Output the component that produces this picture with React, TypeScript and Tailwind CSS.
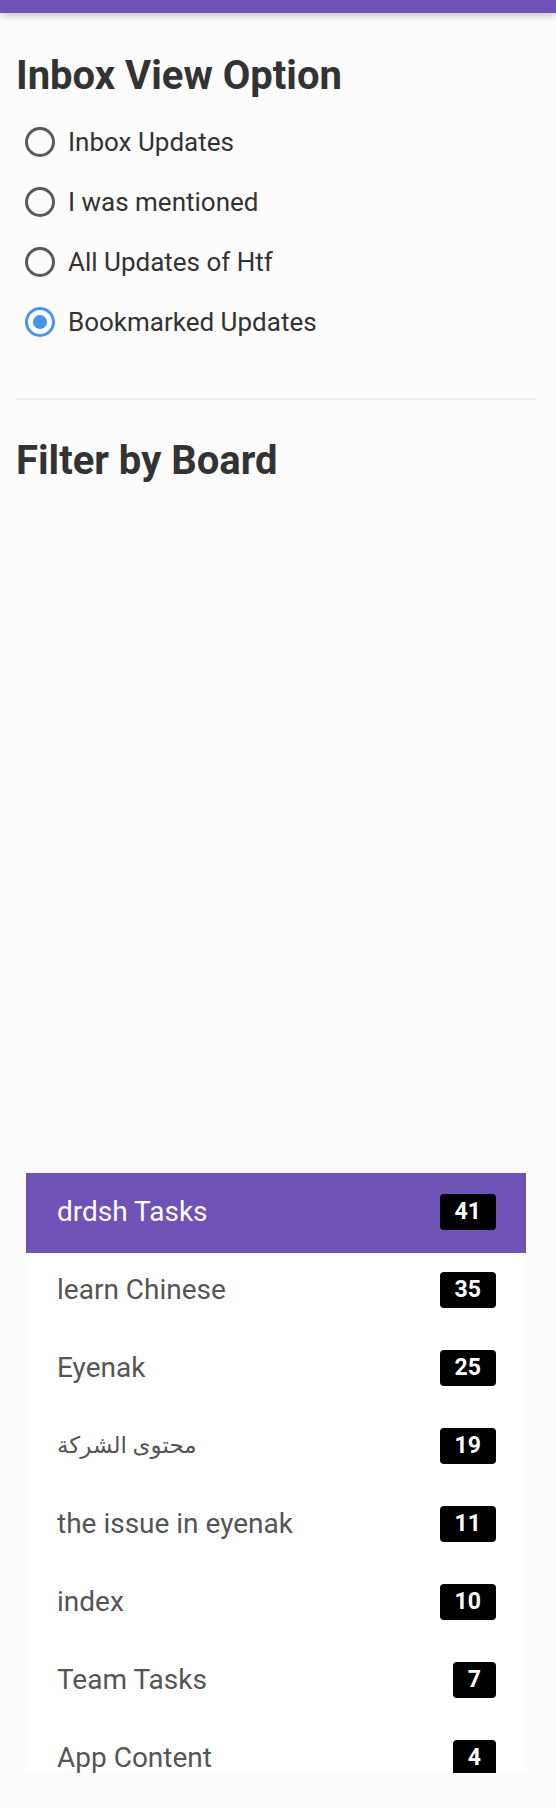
import React, { useState } from 'react';

const options = ['Inbox Updates', 'I was mentioned', 'All Updates of Htf', 'Bookmarked Updates'];

const boards = [
  { name: 'drdsh Tasks', count: 41 },
  { name: 'learn Chinese', count: 35 },
  { name: 'Eyenak', count: 25 },
  { name: 'محتوى الشركة', count: 19, rtl: true },
  { name: 'the issue in eyenak', count: 11 },
  { name: 'index', count: 10 },
  { name: 'Team Tasks', count: 7 },
  { name: 'App Content', count: 4 },
];

export default function App() {
  const [view, setView] = useState(3);
  const [board, setBoard] = useState(0);

  return (
    <div className="min-h-[1808px] bg-[#fcfcfc] font-['Roboto','DejaVu_Sans',sans-serif]">
      <div className="h-[13px] bg-[#6e52b6] shadow-[0_2px_8px_rgba(0,0,0,0.25)]" />

      <div className="pl-4 pr-5 pt-[39px]">
        <h1 className="text-[40px] leading-[48px] font-bold text-[#333]">Inbox View Option</h1>

        <div className="mt-3">
          {options.map((opt, i) => (
            <label
              key={opt}
              onClick={() => setView(i)}
              className="flex h-[60px] items-center cursor-pointer"
            >
              <span
                className={
                  view === i
                    ? 'ml-[9px] flex h-[30px] w-[30px] items-center justify-center rounded-full border-[3.5px] border-[#4a95ec]'
                    : 'ml-[9px] flex h-[30px] w-[30px] items-center justify-center rounded-full border-[3.5px] border-[#595959]'
                }
              >
                {view === i && <span className="h-[14px] w-[14px] rounded-full bg-[#4a95ec]" />}
              </span>
              <span className="ml-[13px] text-[26px] text-[#333]">{opt}</span>
            </label>
          ))}
        </div>

        <div className="mt-[46px] h-[2px] bg-[#eeeeee]" />

        <h2 className="mt-[37px] text-[40px] leading-[48px] font-bold text-[#333]">Filter by Board</h2>

        <div className="mx-[10px] mt-[688px] h-[600px] overflow-hidden bg-white">
          {boards.map((b, i) => (
            <div
              key={b.name}
              onClick={() => setBoard(i)}
              className={
                board === i
                  ? 'relative z-10 flex h-[78px] items-center justify-between bg-[#6e52b6] pl-[31px] pr-[30px] text-white shadow-[0_2px_0_#6e52b6]'
                  : 'flex h-[78px] items-center justify-between pl-[31px] pr-[30px] text-[#555]'
              }
            >
              <span className={b.rtl ? 'text-[23px]' : 'text-[28px]'}>{b.name}</span>
              <span className="flex h-[36px] items-center rounded-[4px] bg-black px-[15px] text-[23px] font-bold text-white">
                {b.count}
              </span>
            </div>
          ))}
        </div>
      </div>
    </div>
  );
}
